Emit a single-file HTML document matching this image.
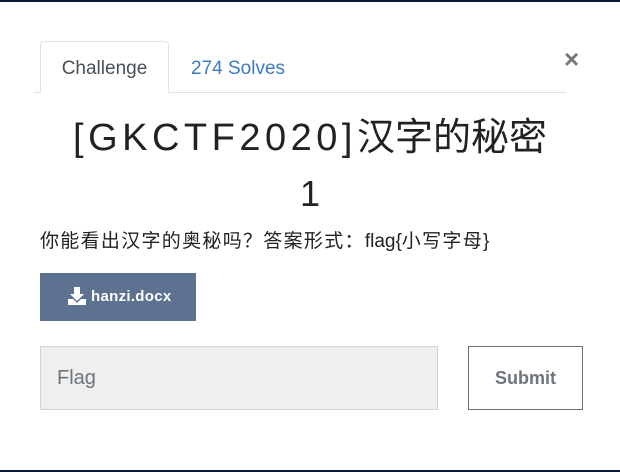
<!DOCTYPE html>
<html><head><meta charset="utf-8"><style>
html,body{margin:0;padding:0;width:620px;height:472px;overflow:hidden;background:#fff;font-family:"Liberation Sans","Noto Sans CJK SC",sans-serif;}
.abs{position:absolute;}
</style></head><body>
<div class="abs" style="left:0;top:0;width:620px;height:2px;background:#0b1a33"></div>
<div class="abs" style="left:0;top:470px;width:620px;height:2px;background:#0b1a33"></div>
<div class="abs" style="left:34px;top:92px;width:532px;height:1px;background:#dee2e6"></div>
<div class="abs" style="left:40px;top:41px;width:129px;height:52px;border:1px solid #dee2e6;border-bottom:1px solid #fff;border-radius:4px 4px 0 0;background:#fff;box-sizing:border-box;"></div>
<div class="abs" style="left:40px;top:58px;width:129px;text-align:center;font-size:19px;color:#495057;">Challenge</div>
<div class="abs" style="left:191px;top:58px;font-size:19px;color:#3d7bbf;">274 Solves</div>
<div class="abs" style="left:564px;top:44px;font-size:26px;color:#777;font-weight:bold;">×</div>
<div class="abs" style="left:0;top:116px;width:620px;text-align:center;font-size:38px;color:#222;line-height:44px;"><span style="letter-spacing:4.5px;">[GKCTF2020]</span>汉字的秘密</div>
<div class="abs" style="left:0;top:174px;width:620px;text-align:center;font-size:36px;color:#222;line-height:40px;">1</div>
<div class="abs" style="left:40px;top:228px;font-size:19px;color:#222;font-family:'Noto Sans CJK SC',sans-serif;letter-spacing:1.3px;line-height:24px;">你能看出汉字的奥秘吗？答案形式：<span style="font-family:'Liberation Sans';letter-spacing:0">flag{</span>小写字母<span style="font-family:'Liberation Sans';">}</span></div>
<div class="abs" style="left:40px;top:273px;width:156px;height:48px;background:#5c7290;"></div>
<svg class="abs" style="left:67px;top:286px" width="20" height="20" viewBox="0 0 20 20"><path d="M7 1h6v7h4l-7 7-7-7h4z" fill="#fff"/><path d="M1 13h5l4 4 4-4h5v6H1z" fill="#fff"/></svg>
<div class="abs" style="left:91px;top:288px;font-size:15px;color:#fff;font-weight:bold;letter-spacing:0.3px;">hanzi.docx</div>
<div class="abs" style="left:40px;top:346px;width:398px;height:64px;background:#efefef;border:1px solid #ced4da;box-sizing:border-box;"></div>
<div class="abs" style="left:57px;top:367px;font-size:20px;color:#6c757d;">Flag</div>
<div class="abs" style="left:468px;top:346px;width:115px;height:64px;border:1px solid #6c757d;box-sizing:border-box;text-align:center;line-height:62px;font-size:18px;font-weight:bold;color:#6c757d;">Submit</div>
</body></html>
